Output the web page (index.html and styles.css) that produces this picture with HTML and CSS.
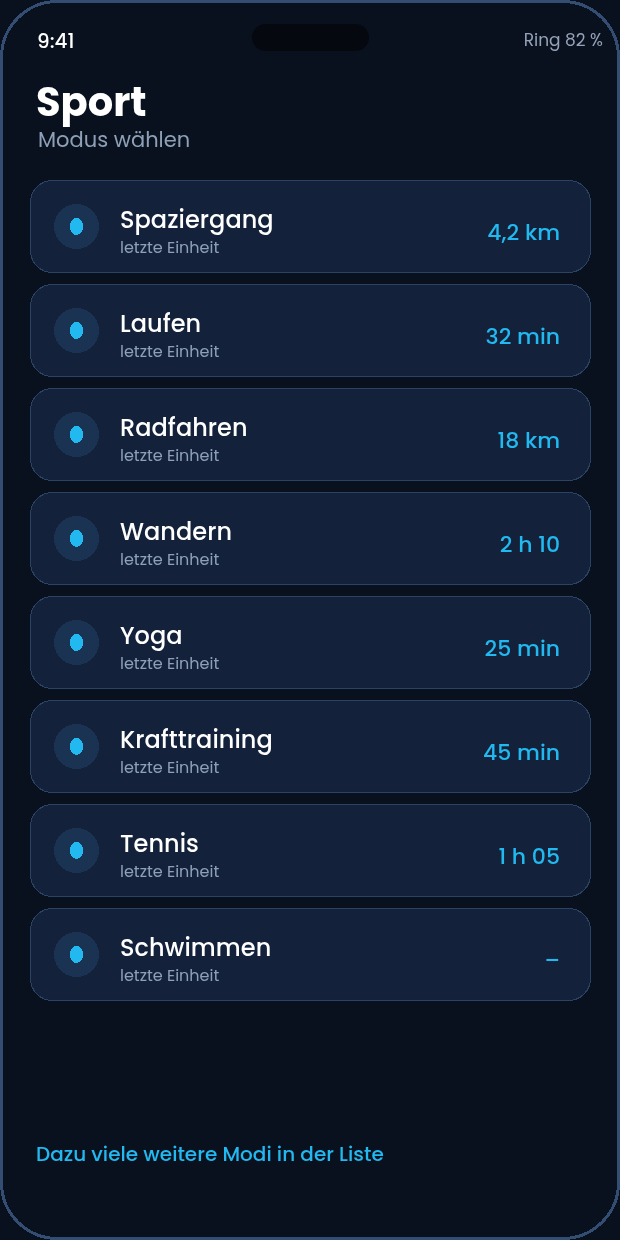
FILE: index.html
```html
<!DOCTYPE html>
<html lang="de">
<head>
<meta charset="UTF-8">
<meta name="viewport" content="width=device-width, initial-scale=1.0">
<title>Sport</title>
<link rel="stylesheet" href="styles.css">
</head>
<body>

<div class="phone">
    <svg class="phone-frame" width="620" height="1240"><rect x="1.5" y="1.5" width="617" height="1237" rx="56"/></svg>
    <div class="island"></div>

    <div class="status-bar">
        <span class="clock">9:41</span>
        <span class="ring">Ring 82 %</span>
    </div>

    <div class="header">
        <h1>Sport</h1>
        <p>Modus wählen</p>
    </div>

    <div class="modes">
        <div class="mode">
            <svg class="mode-bg" width="561" height="93"><rect x="0.5" y="0.5" width="560" height="92" rx="22"/></svg>
            <svg class="mode-icon" width="45" height="45"><circle cx="22.5" cy="22.5" r="22.5"/><ellipse cx="22.5" cy="22.5" rx="6.5" ry="8.5"/></svg>
            <div class="mode-text"><h2>Spaziergang</h2><p>letzte Einheit</p></div>
            <div class="mode-value">4,2 km</div>
        </div>
        <div class="mode">
            <svg class="mode-bg" width="561" height="93"><rect x="0.5" y="0.5" width="560" height="92" rx="22"/></svg>
            <svg class="mode-icon" width="45" height="45"><circle cx="22.5" cy="22.5" r="22.5"/><ellipse cx="22.5" cy="22.5" rx="6.5" ry="8.5"/></svg>
            <div class="mode-text"><h2>Laufen</h2><p>letzte Einheit</p></div>
            <div class="mode-value">32 min</div>
        </div>
        <div class="mode">
            <svg class="mode-bg" width="561" height="93"><rect x="0.5" y="0.5" width="560" height="92" rx="22"/></svg>
            <svg class="mode-icon" width="45" height="45"><circle cx="22.5" cy="22.5" r="22.5"/><ellipse cx="22.5" cy="22.5" rx="6.5" ry="8.5"/></svg>
            <div class="mode-text"><h2>Radfahren</h2><p>letzte Einheit</p></div>
            <div class="mode-value">18 km</div>
        </div>
        <div class="mode">
            <svg class="mode-bg" width="561" height="93"><rect x="0.5" y="0.5" width="560" height="92" rx="22"/></svg>
            <svg class="mode-icon" width="45" height="45"><circle cx="22.5" cy="22.5" r="22.5"/><ellipse cx="22.5" cy="22.5" rx="6.5" ry="8.5"/></svg>
            <div class="mode-text"><h2>Wandern</h2><p>letzte Einheit</p></div>
            <div class="mode-value">2 h 10</div>
        </div>
        <div class="mode">
            <svg class="mode-bg" width="561" height="93"><rect x="0.5" y="0.5" width="560" height="92" rx="22"/></svg>
            <svg class="mode-icon" width="45" height="45"><circle cx="22.5" cy="22.5" r="22.5"/><ellipse cx="22.5" cy="22.5" rx="6.5" ry="8.5"/></svg>
            <div class="mode-text"><h2>Yoga</h2><p>letzte Einheit</p></div>
            <div class="mode-value">25 min</div>
        </div>
        <div class="mode">
            <svg class="mode-bg" width="561" height="93"><rect x="0.5" y="0.5" width="560" height="92" rx="22"/></svg>
            <svg class="mode-icon" width="45" height="45"><circle cx="22.5" cy="22.5" r="22.5"/><ellipse cx="22.5" cy="22.5" rx="6.5" ry="8.5"/></svg>
            <div class="mode-text"><h2>Krafttraining</h2><p>letzte Einheit</p></div>
            <div class="mode-value">45 min</div>
        </div>
        <div class="mode">
            <svg class="mode-bg" width="561" height="93"><rect x="0.5" y="0.5" width="560" height="92" rx="22"/></svg>
            <svg class="mode-icon" width="45" height="45"><circle cx="22.5" cy="22.5" r="22.5"/><ellipse cx="22.5" cy="22.5" rx="6.5" ry="8.5"/></svg>
            <div class="mode-text"><h2>Tennis</h2><p>letzte Einheit</p></div>
            <div class="mode-value">1 h 05</div>
        </div>
        <div class="mode">
            <svg class="mode-bg" width="561" height="93"><rect x="0.5" y="0.5" width="560" height="92" rx="22"/></svg>
            <svg class="mode-icon" width="45" height="45"><circle cx="22.5" cy="22.5" r="22.5"/><ellipse cx="22.5" cy="22.5" rx="6.5" ry="8.5"/></svg>
            <div class="mode-text"><h2>Schwimmen</h2><p>letzte Einheit</p></div>
            <div class="mode-value">–</div>
        </div>
    </div>

    <div class="more">Dazu viele weitere Modi in der Liste</div>
</div>

</body>
</html>
```

FILE: styles.css
```css
* {
    box-sizing: border-box;
}
body, html {
    margin: 0;
    height: 100%;
    background-color: #0a111e;
    font-family: Poppins, Inter, "Noto Sans", sans-serif;
}
h1, h2, p {
    margin: 0;
}
svg {
    shape-rendering: crispEdges;
}
.phone {
    position: relative;
    width: 620px;
    height: 1240px;
    background-color: #0a111e;
    padding: 0 30px;
    display: flex;
    flex-direction: column;
    will-change: transform;
}
.phone-frame {
    position: absolute;
    top: 0;
    left: 0;
    fill: none;
    stroke: #334d73;
    stroke-width: 3;
}
.island {
    position: absolute;
    top: 24px;
    left: 252px;
    width: 117px;
    height: 27px;
    border-radius: 14px;
    background-color: #05090f;
}
.status-bar {
    height: 56px;
    padding: 26px 0 0 7px;
    margin-right: -13px;
    display: flex;
    justify-content: space-between;
    align-items: flex-start;
}
.clock {
    font-size: 20px;
    line-height: 30px;
    font-weight: 500;
    color: #fff;
}
.ring {
    font-size: 17px;
    line-height: 26px;
    margin-top: 1px;
    color: #94a3b8;
}
.header {
    padding-left: 6px;
    height: 124px;
}
.header h1 {
    font-size: 40px;
    line-height: 46px;
    margin-top: 23px;
    font-weight: 700;
    color: #fff;
}
.header p {
    font-size: 21px;
    line-height: 26px;
    margin-top: 2px;
    margin-left: 2px;
    color: #8ea0b8;
}
.modes {
    display: flex;
    flex-direction: column;
    gap: 11px;
}
.mode {
    position: relative;
    width: 561px;
    height: 93px;
    display: flex;
    align-items: center;
    padding: 0 31px 0 24px;
}
.mode-bg {
    position: absolute;
    top: 0;
    left: 0;
    fill: #13223a;
    stroke: #2a4263;
}
.mode-icon {
    position: relative;
    flex: none;
    fill: #1a3352;
}
.mode-icon ellipse {
    fill: #22b8f0;
}
.mode-text {
    position: relative;
    flex: 1;
    margin-left: 21px;
    margin-top: 11px;
}
.mode-text h2 {
    font-size: 24px;
    line-height: 30px;
    font-weight: 500;
    letter-spacing: 0.05px;
    color: #fff;
}
.mode-text p {
    font-size: 16px;
    line-height: 24px;
    margin-top: 1px;
    color: #8ea0b8;
}
.mode-value {
    position: relative;
    font-size: 22px;
    line-height: 28px;
    font-weight: 500;
    margin-top: 12px;
    color: #22b8f0;
}
.more {
    margin-top: 139px;
    margin-left: 6px;
    font-size: 20px;
    line-height: 28px;
    font-weight: 500;
    color: #22b8f0;
}
```
